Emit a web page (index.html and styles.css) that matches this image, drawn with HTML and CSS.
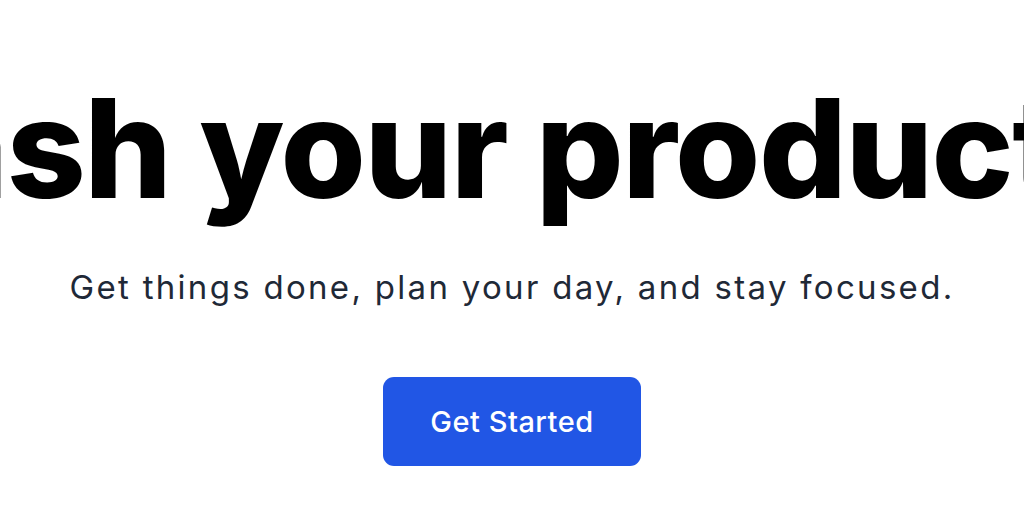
FILE: index.html
```html
<!DOCTYPE html>
<html lang="en">
<head>
<meta charset="utf-8">
<link rel="stylesheet" href="styles.css">
</head>
<body>
<main class="hero">
  <h1 class="title">Unleash your productivity.</h1>
  <p class="subtitle">Get things done, plan your day, and stay focused.</p>
  <a class="cta" href="#">Get Started</a>
</main>
</body>
</html>
```
FILE: styles.css
```css
html, body {
  margin: 0;
  padding: 0;
  background: #ffffff;
  overflow: hidden;
}
body {
  font-family: Inter, "Noto Sans", sans-serif;
  width: 1024px;
  height: 512px;
}
.hero {
  display: flex;
  flex-direction: column;
  align-items: center;
  padding-top: 79px;
}
.title {
  margin: 0;
  white-space: nowrap;
  font-size: 138px;
  font-weight: 800;
  line-height: 138px;
  letter-spacing: -1.5px;
  color: #000000;
}
.subtitle {
  margin: 50px 0 0;
  font-size: 33px;
  line-height: 40px;
  letter-spacing: 2.3px;
  color: #1f2937;
}
.cta {
  margin-top: 70px;
  width: 258px;
  height: 89px;
  display: flex;
  align-items: center;
  justify-content: center;
  background: #2156e5;
  color: #ffffff;
  border-radius: 11px;
  font-size: 29px;
  font-weight: 500;
  letter-spacing: 0.5px;
  text-decoration: none;
}
```
